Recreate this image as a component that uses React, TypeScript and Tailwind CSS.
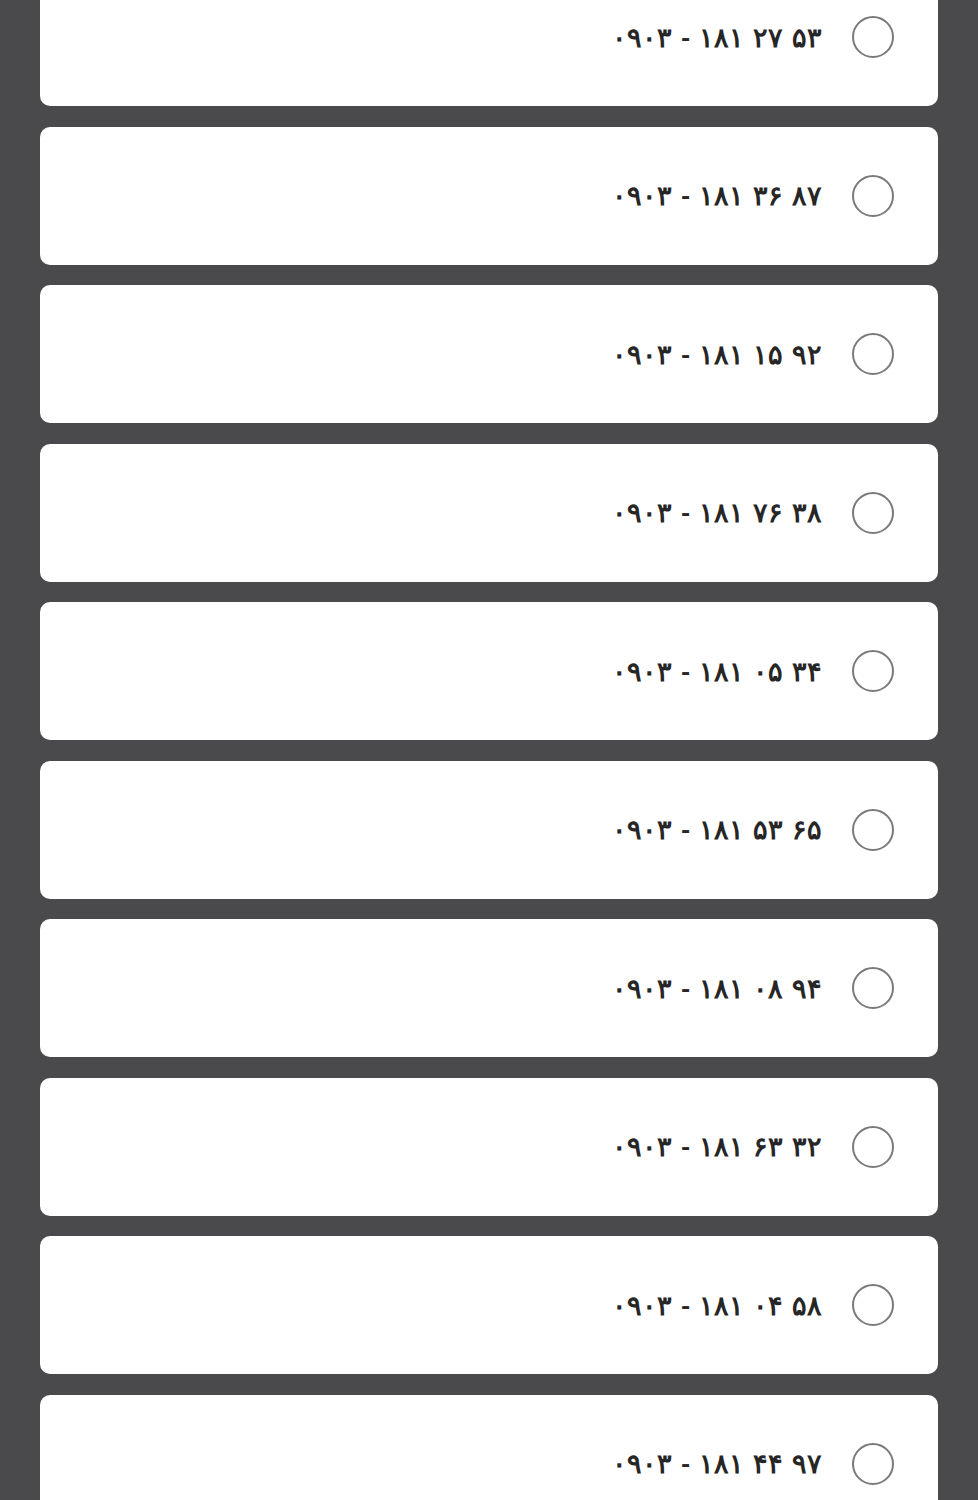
import React from "react";

const numbers = [
  "۰۹۰۳ - ۱۸۱ ۲۷ ۵۳",
  "۰۹۰۳ - ۱۸۱ ۳۶ ۸۷",
  "۰۹۰۳ - ۱۸۱ ۱۵ ۹۲",
  "۰۹۰۳ - ۱۸۱ ۷۶ ۳۸",
  "۰۹۰۳ - ۱۸۱ ۰۵ ۳۴",
  "۰۹۰۳ - ۱۸۱ ۵۳ ۶۵",
  "۰۹۰۳ - ۱۸۱ ۰۸ ۹۴",
  "۰۹۰۳ - ۱۸۱ ۶۳ ۳۲",
  "۰۹۰۳ - ۱۸۱ ۰۴ ۵۸",
  "۰۹۰۳ - ۱۸۱ ۴۴ ۹۷",
];

const App = () => {
  return (
    <div className="h-[1500px] overflow-hidden bg-[#4a4a4d] px-10">
      <div className="-mt-[32px] flex flex-col gap-[20.5px]" dir="rtl">
        {numbers.map((num) => (
          <label
            key={num}
            className="flex h-[138px] shrink-0 items-center gap-[30px] rounded-[10px] bg-white pr-[44px]"
          >
            {/* radio */}
            <span className="h-[42px] w-[42px] shrink-0 rounded-full border-2 border-[#7a7a7a]" />
            <span
              dir="ltr"
              className="font-['Noto_Sans',sans-serif] text-[27px] font-semibold text-[#262626] [word-spacing:2px]"
            >
              {num}
            </span>
          </label>
        ))}
      </div>
    </div>
  );
};

export default App;
